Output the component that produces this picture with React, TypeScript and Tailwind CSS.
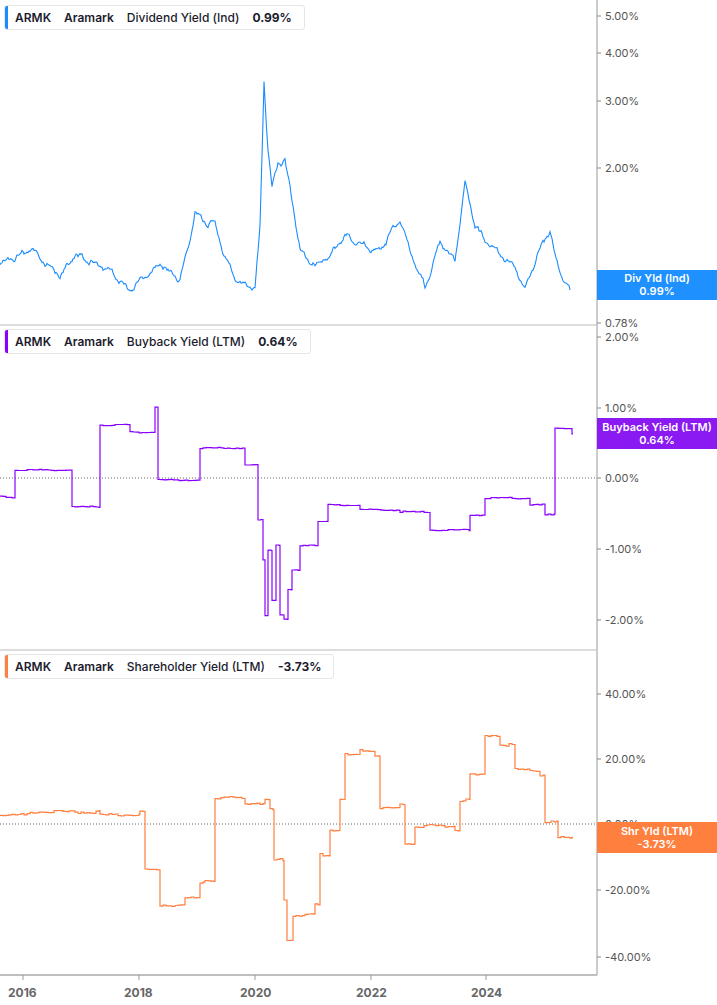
import React from "react";

type P = [number, number];
function noise(i: number, s: number) {
  return Math.sin(i * 12.9898 + s * 78.233) * 43758.5453 % 1;
}
function linePath(pts: P[], amp: number, seed: number, step = 1) {
  let d = "";
  let k = 0;
  let walk = 0;
  for (let s = 0; s < pts.length - 1; s++) {
    const [x0, y0] = pts[s];
    const [x1, y1] = pts[s + 1];
    for (let x = x0; x < x1; x += step) {
      const t = (x - x0) / (x1 - x0);
      walk = walk * 0.8 + noise(k, seed) * amp;
      const y = y0 + (y1 - y0) * t + walk + noise(k + 999, seed) * amp * 0.6;
      d += (d ? "L" : "M") + x.toFixed(1) + " " + y.toFixed(1);
      k++;
    }
  }
  const l = pts[pts.length - 1];
  d += "L" + l[0] + " " + l[1];
  return d;
}
function stepPath(pts: P[], amp: number, seed: number) {
  let d = "";
  let k = 0;
  for (let s = 0; s < pts.length - 1; s++) {
    const [x0, y0] = pts[s];
    const [x1] = pts[s + 1];
    for (let x = x0; x < x1; x += 3) {
      const y = y0 + (amp ? noise(k, seed) * amp : 0);
      d += (d ? "L" : "M") + x + " " + y.toFixed(1) + "L" + Math.min(x + 3, x1) + " " + y.toFixed(1);
      k++;
    }
  }
  return d;
}

const divPts: P[] = [[0,265],[15,258],[30,248],[45,262],[60,275],[75,255],[90,262],[110,270],[130,290],[145,278],[160,265],[180,280],[190,240],[195,210],[205,222],[215,225],[225,255],[235,278],[255,290],[260,230],[264,82],[268,150],[272,190],[278,165],[285,160],[292,200],[300,250],[315,265],[330,255],[345,235],[360,245],[380,250],[400,218],[410,250],[425,287],[440,240],[455,262],[465,185],[475,225],[485,240],[500,255],[515,265],[525,288],[540,250],[550,230],[556,262],[562,275],[570,290]];
const bbPts: P[] = [[0,497],[15,470],[72,507],[100,425],[130,432],[155,407],[158,480],[200,448],[245,465],[258,520],[263,560],[265,615],[268,550],[272,600],[276,545],[280,615],[284,620],[288,590],[292,570],[300,545],[318,522],[328,505],[360,510],[400,512],[430,530],[470,515],[485,498],[530,505],[545,515],[555,428],[572,433],[573,433]];
const shPts: P[] = [[0,815],[30,812],[100,815],[140,812],[145,870],[160,905],[185,898],[200,882],[205,880],[215,798],[245,803],[265,800],[270,810],[274,860],[284,900],[287,940],[293,915],[315,905],[320,855],[330,830],[340,800],[345,755],[360,750],[375,755],[380,808],[400,805],[405,843],[415,826],[455,830],[460,800],[470,775],[485,735],[500,745],[515,770],[540,775],[545,822],[558,838],[572,836],[573,836]];

const tickText = { fontSize: 11, fill: "#555", fontFamily: "Inter, sans-serif" } as const;

function Axis({ items }: { items: [number, string][] }) {
  return (
    <>
      {items.map(([y, t]) => (
        <g key={t + y}>
          <line x1={597} x2={601} y1={y} y2={y} stroke="#888" />
          <text x={605} y={y + 4} {...tickText}>{t}</text>
        </g>
      ))}
    </>
  );
}

function Legend({ top, color, name, val }: { top: number; color: string; name: string; val: string }) {
  return (
    <div className="absolute left-[4px] flex items-center h-[25px] bg-white border border-[#e6e6e6] rounded-[3px] overflow-hidden text-[12px] font-semibold text-[#1c1c2e] gap-[13px] pr-[12px]" style={{ top }}>
      <div className="w-[3px] h-full" style={{ background: color }} />
      <span className="-ml-[6px]">ARMK</span>
      <span>Aramark</span>
      <span className="font-medium">{name}</span>
      <span className="font-bold">{val}</span>
    </div>
  );
}

function Tag({ top, h, color, a, b }: { top: number; h: number; color: string; a: string; b: string }) {
  return (
    <div className="absolute left-[597px] w-[120px] flex flex-col items-center justify-center text-white text-[11px] font-semibold leading-[13px]" style={{ top, height: h, background: color }}>
      <span>{a}</span>
      <span>{b}</span>
    </div>
  );
}

export default function App() {
  return (
    <div className="relative w-[717px] h-[1005px] bg-white overflow-hidden" style={{ fontFamily: "Inter, sans-serif" }}>
      <svg width={717} height={1005} className="block">
        <line x1={597} x2={597} y1={0} y2={975} stroke="#999" />
        <line x1={0} x2={597} y1={325} y2={325} stroke="#bbb" />
        <line x1={0} x2={597} y1={650} y2={650} stroke="#bbb" />
        <line x1={0} x2={597} y1={975} y2={975} stroke="#aaa" strokeWidth={1.5} />
        <line x1={0} x2={597} y1={478} y2={478} stroke="#666" strokeDasharray="1 2" />
        <line x1={0} x2={597} y1={824} y2={824} stroke="#666" strokeDasharray="1 2" />
        <Axis items={[[16,"5.00%"],[53,"4.00%"],[101,"3.00%"],[168,"2.00%"],[283,"1.00%"],[323,"0.78%"],[337,"2.00%"],[408,"1.00%"],[478,"0.00%"],[549,"-1.00%"],[620,"-2.00%"],[694,"40.00%"],[759,"20.00%"],[824,"0.00%"],[890,"-20.00%"],[957,"-40.00%"]]} />
        {[[23,"2016"],[139,"2018"],[255,"2020"],[371,"2022"],[486,"2024"]].map(([x, t]) => (
          <g key={t as string}>
            <line x1={x as number} x2={x as number} y1={975} y2={980} stroke="#999" />
            <text x={(x as number) - 15} y={997} fontSize={12} fontWeight={700} fill="#666" fontFamily="Inter, sans-serif">{t}</text>
          </g>
        ))}
        <path d={linePath(divPts, 2.2, 1)} fill="none" stroke="#1a8cff" strokeWidth={1.1} />
        <path d={stepPath(bbPts, 0.8, 2)} fill="none" stroke="#8a00ff" strokeWidth={1.2} />
        <path d={stepPath(shPts, 1.5, 3)} fill="none" stroke="#ff7f3f" strokeWidth={1.2} />
      </svg>
      <Legend top={5} color="#1a8cff" name="Dividend Yield (Ind)" val="0.99%" />
      <Legend top={329} color="#8a00ff" name="Buyback Yield (LTM)" val="0.64%" />
      <Legend top={654} color="#ff7f3f" name="Shareholder Yield (LTM)" val="-3.73%" />
      <Tag top={270} h={30} color="#1e90ff" a="Div Yld (Ind)" b="0.99%" />
      <Tag top={418} h={31} color="#8a19f2" a="Buyback Yield (LTM)" b="0.64%" />
      <Tag top={822} h={31} color="#ff7f3f" a="Shr Yld (LTM)" b="-3.73%" />
    </div>
  );
}
